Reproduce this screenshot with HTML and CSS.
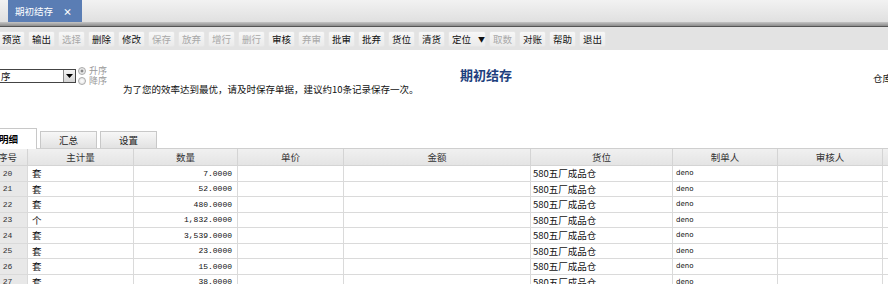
FILE: index.html
```html
<!DOCTYPE html>
<html lang="zh-CN">
<head>
  <meta charset="UTF-8">
  <title>期初结存</title>
  <link rel="stylesheet" href="styles.css">
</head>
<body>
  <div class="tabbar">
    <div class="doc-tab">期初结存<span class="close">×</span></div>
  </div>
  <div class="tabbar-edge"></div>

  <div class="toolbar">
    <span class="tb">预览</span>
    <span class="tb">输出</span>
    <span class="tb off">选择</span>
    <span class="tb">删除</span>
    <span class="tb">修改</span>
    <span class="tb off">保存</span>
    <span class="tb off">放弃</span>
    <span class="tb off">增行</span>
    <span class="tb off">删行</span>
    <span class="tb">审核</span>
    <span class="tb off">弃审</span>
    <span class="tb">批审</span>
    <span class="tb">批弃</span>
    <span class="tb">货位</span>
    <span class="tb">清货</span>
    <span class="tb drop">定位<span class="caret">▼</span></span>
    <span class="tb off">取数</span>
    <span class="tb">对账</span>
    <span class="tb">帮助</span>
    <span class="tb">退出</span>
  </div>

  <div class="head">
    <div class="sort-box">
      <div class="combo">
        <span class="combo-text">序</span>
        <span class="combo-btn">
          <svg width="7" height="4" viewBox="0 0 7 4"><path d="M0 0h7L3.5 4z" fill="#000"/></svg>
        </span>
      </div>
      <div class="order">
        <label class="radio"><span class="dot on"></span>升序</label>
        <label class="radio"><span class="dot"></span>降序</label>
      </div>
    </div>
    <div class="notice">
      <div class="title">期初结存</div>
      <div class="tip">为了您的效率达到最优，请及时保存单据，建议约10条记录保存一次。</div>
    </div>
    <div class="warehouse">仓库</div>
  </div>

  <div class="tabs">
    <span class="tab active">明细</span>
    <span class="tab">汇总</span>
    <span class="tab">设置</span>
  </div>

  <table class="grid">
    <colgroup>
      <col style="width:40px">
      <col style="width:106px">
      <col style="width:104px">
      <col style="width:106px">
      <col style="width:187px">
      <col style="width:142px">
      <col style="width:105px">
      <col style="width:105px">
      <col style="width:60px">
    </colgroup>
    <thead>
      <tr>
        <th>序号</th><th>主计量</th><th>数量</th><th>单价</th><th>金额</th><th>货位</th><th>制单人</th><th>审核人</th><th></th>
      </tr>
    </thead>
    <tbody id="rows"></tbody>
  </table>

  <script>
    const rows = [
      ["20", "套", "7.0000"],
      ["21", "套", "52.0000"],
      ["22", "套", "480.0000"],
      ["23", "个", "1,832.0000"],
      ["24", "套", "3,539.0000"],
      ["25", "套", "23.0000"],
      ["26", "套", "15.0000"],
      ["27", "套", "38.0000"]
    ];

    const body = document.getElementById("rows");
    rows.forEach(r => {
      const tr = document.createElement("tr");
      tr.innerHTML =
        `<td class="no">${r[0]}</td>` +
        `<td class="unit">${r[1]}</td>` +
        `<td class="num">${r[2]}</td>` +
        `<td></td><td></td>` +
        `<td class="loc">580五厂成品仓</td>` +
        `<td class="user">deno</td>` +
        `<td></td><td></td>`;
      body.appendChild(tr);
    });
  </script>
</body>
</html>
```

FILE: styles.css
```css
body {
  margin: 0;
  width: 888px;
  height: 284px;
  overflow: hidden;
  background: #fff;
  color: #111;
  font-family: "Noto Sans CJK SC", "Noto Sans", sans-serif;
  font-size: 9.5px;
}

.tabbar {
  height: 22px;
  background: linear-gradient(#f2f2f2, #e0e0e0);
  padding-left: 8px;
}
.doc-tab {
  display: inline-flex;
  align-items: center;
  box-sizing: border-box;
  width: 74px;
  height: 22px;
  padding-left: 7px;
  background: #5a7db4;
  color: #fff;
  font-size: 9.5px;
}
.close {
  margin-left: 10px;
  font-size: 9px;
  font-weight: bold;
}
.tabbar-edge {
  height: 4px;
  background: linear-gradient(#c4c4c4, #8c8c8c);
  border-bottom: 1px solid #555;
}

.toolbar {
  display: flex;
  align-items: center;
  gap: 3px;
  height: 23px;
  background: #e3e3e3;
  margin-left: -2px;
  padding-top: 1px;
  box-sizing: border-box;
}
.tb {
  display: inline-flex;
  align-items: center;
  justify-content: center;
  box-sizing: border-box;
  width: 27px;
  height: 16px;
  background: linear-gradient(#f7f7f7, #ebebeb);
  border: 1px solid #e6e6e6;
  border-radius: 2px;
  color: #111;
}
.tb.off {
  color: #a8a8a8;
}
.tb.drop {
  width: 38px;
  justify-content: flex-start;
  padding-left: 3px;
}
.caret {
  margin-left: 7px;
  font-size: 7px;
}

.head {
  display: flex;
  height: 77px;
  box-sizing: border-box;
  padding-top: 16px;
}
.sort-box {
  display: flex;
  width: 125px;
  flex: none;
  margin-left: -2px;
}
.combo {
  display: flex;
  box-sizing: border-box;
  width: 78px;
  height: 14px;
  margin-top: 3px;
  border: 1px solid #444;
  background: #fff;
}
.combo-text {
  flex: 1;
  padding-left: 2px;
  line-height: 12px;
}
.combo-btn {
  display: flex;
  align-items: center;
  justify-content: center;
  width: 11px;
  background: linear-gradient(#f4f4f4, #d4d4d4);
  border-left: 1px solid #888;
}
.order {
  display: flex;
  flex-direction: column;
  margin-left: 2px;
}
.radio {
  display: flex;
  align-items: center;
  height: 10px;
  line-height: 10px;
  font-size: 9px;
  color: #999;
}
.dot {
  box-sizing: border-box;
  width: 8px;
  height: 8px;
  margin-right: 3px;
  border: 1px solid #aaa;
  border-radius: 50%;
  background: radial-gradient(#fff, #ddd);
}
.dot.on {
  background: radial-gradient(#888 30%, #e8e8e8 40%);
}
.notice {
  flex: 1;
}
.title {
  margin-left: 337px;
  height: 18px;
  line-height: 18px;
  font-size: 13px;
  font-weight: bold;
  color: #1e3f7e;
}
.tip {
  line-height: 12px;
  margin-top: -1px;
  font-size: 9.5px;
}
.warehouse {
  width: 30px;
  margin-right: -15px;
  margin-top: 5px;
  white-space: nowrap;
}

.tabs {
  display: flex;
  align-items: flex-end;
  gap: 3px;
  height: 21px;
  margin-left: -20px;
  border-bottom: 1px solid #cfcfcf;
}
.tab {
  display: flex;
  align-items: center;
  justify-content: center;
  box-sizing: border-box;
  width: 57px;
  height: 17px;
  border: 1px solid #c8c8c8;
  border-bottom: none;
  background: linear-gradient(#f7f7f7, #e2e2e2);
  color: #222;
}
.tab.active {
  height: 21px;
  background: #fff;
  font-weight: bold;
  margin-bottom: -1px;
  color: #000;
}

.grid {
  table-layout: fixed;
  border-collapse: collapse;
  width: 955px;
  margin-left: -13px;
}
.grid th {
  height: 16px;
  padding: 0;
  background: linear-gradient(#f0f0f0, #e4e4e4);
  border: 1px solid #d4d4d4;
  border-top: none;
  font-weight: normal;
  color: #333;
  text-align: center;
}
.grid td {
  height: 14.5px;
  padding: 0;
  border: 1px solid #dadada;
  white-space: nowrap;
  overflow: hidden;
}
.grid td.no {
  background: #e8e8e8;
  text-align: center;
  font-family: "Liberation Mono", monospace;
  font-size: 8px;
  color: #333;
}
.grid td.unit {
  padding-left: 4px;
}
.grid td.num {
  text-align: right;
  padding-right: 5px;
  font-family: "Liberation Mono", monospace;
  font-size: 8px;
}
.grid td.loc {
  padding-left: 2px;
}
.grid td.user {
  padding-left: 3px;
  font-family: "DejaVu Sans", sans-serif;
  font-size: 7px;
}
```
